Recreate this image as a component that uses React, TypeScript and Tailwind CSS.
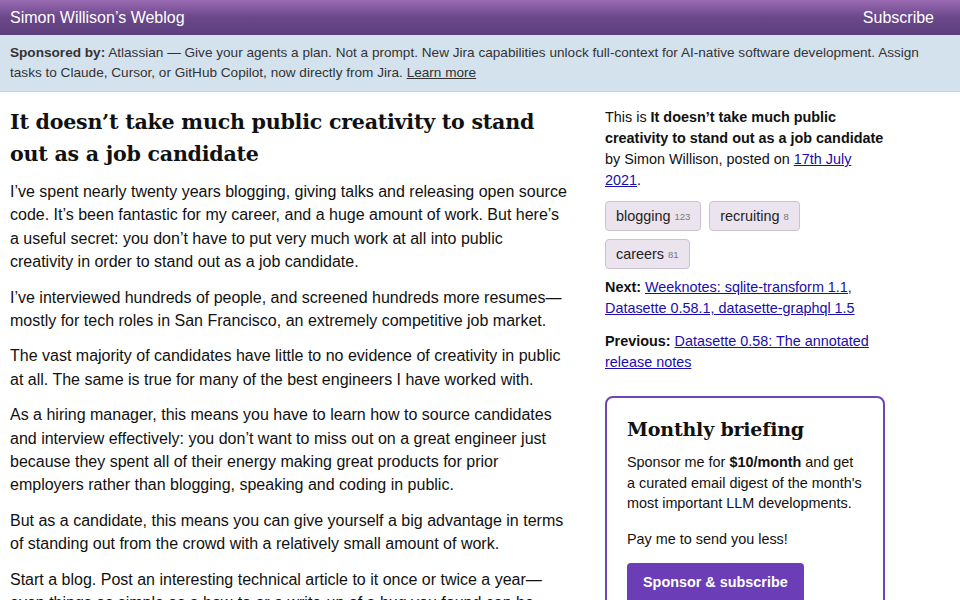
import React from "react";

const sans = { fontFamily: '"Liberation Sans", Arial, sans-serif' };
const serif = { fontFamily: '"DejaVu Serif", Georgia, serif' };

function Tag({ name, count }: { name: string; count: string }) {
  return (
    <span className="inline-flex items-center h-[30px] px-[10px] rounded-[4px] bg-[#ebe4ee] border border-[#cbc2cf] text-[14.4px] text-[#222] mr-[8px] mb-[8px]">
      {name}
      <span className="ml-[4px] text-[9.5px] text-[#777]">{count}</span>
    </span>
  );
}

export default function App() {
  return (
    <div className="w-[960px] h-[600px] overflow-hidden bg-white text-[#111]" style={sans}>
      <div className="h-[35px] flex items-center justify-between pl-[10px] pr-[26px] text-white text-[16px] bg-gradient-to-b from-[#9c6cb4] via-[#6a4789] to-[#5d3f7e]">
        <span>Simon Willison’s Weblog</span>
        <span>Subscribe</span>
      </div>
      <div className="bg-[#d4e2ee] border-b border-[#c9d2da] px-[10px] pt-[8px] pb-[9px] text-[13.6px] leading-[19.5px] text-[#333]">
        <b>Sponsored by:</b> Atlassian — Give your agents a plan. Not a prompt. New Jira capabilities unlock full-context for AI-native software development. Assign tasks to Claude, Cursor, or GitHub Copilot, now directly from Jira. <span className="underline">Learn more</span>
      </div>
      <div className="flex">
        <div className="w-[568px] shrink-0 pl-[10px] pt-[14px]">
          <h1 className="text-[20.6px] leading-[32px] font-bold text-[#111] mb-[10px] tracking-[-0.25px]" style={serif}>
            It doesn’t take much public creativity to stand out as a job candidate
          </h1>
          <div className="text-[16px] leading-[23.4px] text-[#111]">
            <p className="mb-[12px]">
              I’ve spent nearly twenty years blogging, giving talks and releasing open source code. It’s been fantastic for my career, and a huge amount of work. But here’s a useful secret: you don’t have to put very much work at all into public creativity in order to stand out as a job candidate.
            </p>
            <p className="mb-[12px]">
              I’ve interviewed hundreds of people, and screened hundreds more resumes—mostly for tech roles in San Francisco, an extremely competitive job market.
            </p>
            <p className="mb-[12px]">
              The vast majority of candidates have little to no evidence of creativity in public at all. The same is true for many of the best engineers I have worked with.
            </p>
            <p className="mb-[12px]">
              As a hiring manager, this means you have to learn how to source candidates and interview effectively: you don’t want to miss out on a great engineer just because they spent all of their energy making great products for prior employers rather than blogging, speaking and coding in public.
            </p>
            <p className="mb-[12px]">
              But as a candidate, this means you can give yourself a big advantage in terms of standing out from the crowd with a relatively small amount of work.
            </p>
            <p className="mb-[12px]">
              Start a blog. Post an interesting technical article to it once or twice a year—even things as simple as a how-to or a write-up of a bug you found can be valuable and make a huge difference.
            </p>
          </div>
        </div>
        <div className="ml-[37px] w-[280px] shrink-0 pt-[15px] text-[14.4px] leading-[21px] text-[#111]">
          <p className="mb-[10px]">
            This is <b>It doesn’t take much public creativity to stand out as a job candidate</b> by Simon Willison, posted on <span className="text-[#1a0dab] underline">17th July 2021</span>.
          </p>
          <div className="flex flex-wrap">
            <Tag name="blogging" count="123" />
            <Tag name="recruiting" count="8" />
            <Tag name="careers" count="81" />
          </div>
          <p className="mb-[12px]">
            <b>Next:</b> <span className="text-[#1a0dab] underline">Weeknotes: sqlite-transform 1.1, Datasette 0.58.1, datasette-graphql 1.5</span>
          </p>
          <p className="mb-[23px]">
            <b>Previous:</b> <span className="text-[#1a0dab] underline">Datasette 0.58: The annotated release notes</span>
          </p>
          <div className="border-2 border-[#6e45b2] rounded-[8px] px-[20px] pt-[16px] pb-[20px]">
            <h2 className="text-[19px] leading-[30px] font-bold text-[#111] mb-[8px] tracking-[-0.2px]" style={serif}>
              Monthly briefing
            </h2>
            <p className="mb-[15px] leading-[20.5px]">
              Sponsor me for <b>$10/month</b> and get a curated email digest of the month's most important LLM developments.
            </p>
            <p className="mb-[13px]">Pay me to send you less!</p>
            <div className="inline-flex items-center h-[40px] px-[16px] rounded-[4px] bg-[#6b3db6] text-white font-bold text-[14.4px]">
              Sponsor &amp; subscribe
            </div>
          </div>
        </div>
      </div>
    </div>
  );
}
